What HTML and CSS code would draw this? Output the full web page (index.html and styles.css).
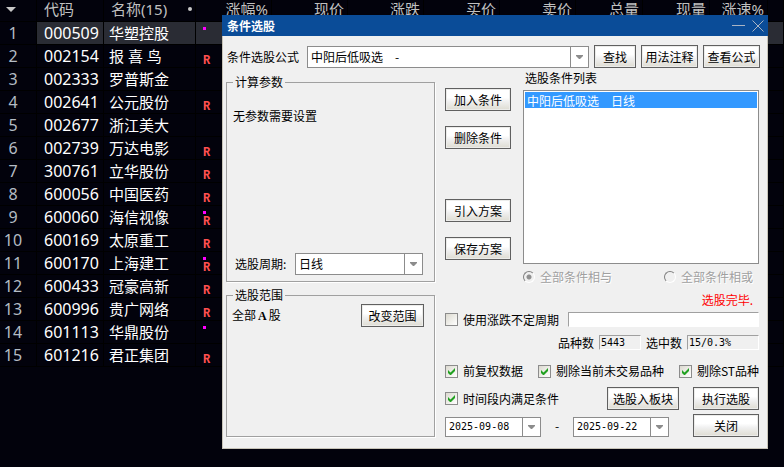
FILE: index.html
```html
<!DOCTYPE html>
<html lang="zh-CN">
<head>
  <meta charset="UTF-8">
  <meta name="viewport" content="width=device-width, initial-scale=1.0">
  <title>条件选股</title>
  <link rel="stylesheet" href="styles.css">
</head>
<body>

<table class="quotes">
  <colgroup>
    <col class="c-index"><col class="c-code"><col class="c-name">
    <col class="c-wide"><col class="c-wide"><col class="c-wide"><col class="c-wide"><col class="c-wide">
    <col class="c-mid"><col class="c-mid"><col class="c-small"><col>
  </colgroup>
  <thead>
    <tr>
      <th class="index"><svg class="sort" width="10" height="5" viewBox="0 0 10 5"><path d="M0 0h10L5 5z" fill="#c8c8c8"/></svg></th>
      <th class="code">代码</th>
      <th class="name"><div class="name-head"><span>名称(15)</span><i class="bullet"></i></div></th>
      <th>涨幅%</th><th>现价</th><th>涨跌</th><th>买价</th><th>卖价</th><th>总量</th><th>现量</th><th>涨速%</th><th></th>
    </tr>
  </thead>
  <tbody id="rows"></tbody>
</table>

<div class="dialog" role="dialog" aria-labelledby="dialogTitle">
  <div class="titlebar">
    <h1 id="dialogTitle">条件选股</h1>
    <button type="button" class="win-btn" aria-label="最小化"><svg width="13" height="13" viewBox="0 0 13 13"><path d="M0 6.500h13" stroke="#a9b4c4" fill="none"/></svg></button>
    <button type="button" class="win-btn" aria-label="关闭窗口"><svg width="12" height="12" viewBox="0 0 12 12"><path d="M.5.5l11 11M11.500.5l-11 11" stroke="#a9b4c4" fill="none"/></svg></button>
  </div>

  <form class="content">
    <div class="formula">
      <label for="formula">条件选股公式</label>
      <select id="formula" class="combo"><option>中阳后低吸选　-</option></select>
      <button type="button" class="btn find">查找</button>
      <button type="button" class="btn wide">用法注释</button>
      <button type="button" class="btn wide">查看公式</button>
    </div>

    <div class="main">
      <div class="left">
        <fieldset class="group params">
          <legend>计算参数</legend>
          <p class="hint">无参数需要设置</p>
          <div class="period">
            <label for="period">选股周期:</label>
            <select id="period" class="combo"><option>日线</option></select>
          </div>
        </fieldset>
        <fieldset class="group range">
          <legend>选股范围</legend>
          <div class="range-row">
            <span>全部<b>A</b>股</span>
            <button type="button" class="btn">改变范围</button>
          </div>
        </fieldset>
      </div>

      <div class="right">
        <div class="conditions">
          <div class="actions">
            <button type="button" class="btn">加入条件</button>
            <button type="button" class="btn">删除条件</button>
            <button type="button" class="btn load">引入方案</button>
            <button type="button" class="btn">保存方案</button>
          </div>
          <div class="list">
            <label for="list">选股条件列表</label>
            <select id="list" class="listbox" size="8"><option selected>中阳后低吸选　日线</option></select>
            <div class="radios">
              <label><input type="radio" name="mode" checked disabled> 全部条件相与</label>
              <label><input type="radio" name="mode" disabled> 全部条件相或</label>
            </div>
          </div>
        </div>

        <p class="status">选股完毕.</p>

        <div class="line unfixed">
          <label class="check"><input type="checkbox"> 使用涨跌不定周期</label>
          <input type="text" class="field empty" aria-label="不定周期">
        </div>

        <div class="line counts">
          <label for="total">品种数</label>
          <input id="total" type="text" class="field total" value="5443" readonly>
          <label for="hits">选中数</label>
          <input id="hits" type="text" class="field hits" value="15/0.3%" readonly>
        </div>

        <div class="line filters">
          <label class="check"><input type="checkbox" checked> 前复权数据</label>
          <label class="check"><input type="checkbox" checked> 剔除当前未交易品种</label>
          <label class="check"><input type="checkbox" checked> 剔除ST品种</label>
        </div>

        <div class="line run">
          <label class="check"><input type="checkbox" checked> 时间段内满足条件</label>
          <button type="button" class="btn block">选股入板块</button>
          <button type="button" class="btn">执行选股</button>
        </div>

        <div class="line dates">
          <select class="combo date" aria-label="开始日期"><option>2025-09-08</option></select>
          <span class="dash">-</span>
          <select class="combo date" aria-label="结束日期"><option>2025-09-22</option></select>
          <button type="button" class="btn">关闭</button>
        </div>
      </div>
    </div>
  </form>
</div>

<script>
  // 代码, 名称, 圆点标记, 融资标记
  const stocks = [
    ["000509", "华塑控股", 1, 0],
    ["002154", "报 喜 鸟", 0, 1],
    ["002333", "罗普斯金", 0, 0],
    ["002641", "公元股份", 0, 1],
    ["002677", "浙江美大", 0, 0],
    ["002739", "万达电影", 0, 1],
    ["300761", "立华股份", 0, 1],
    ["600056", "中国医药", 0, 1],
    ["600060", "海信视像", 1, 1],
    ["600169", "太原重工", 0, 1],
    ["600170", "上海建工", 1, 1],
    ["600433", "冠豪高新", 0, 1],
    ["600996", "贵广网络", 0, 1],
    ["601113", "华鼎股份", 1, 0],
    ["601216", "君正集团", 0, 1]
  ];

  document.getElementById("rows").innerHTML = stocks.map(([code, name, dot, tag], i) => `
    <tr class="${i === 0 ? "selected" : ""}">
      <td class="index">${i + 1}</td>
      <td class="code">${code}</td>
      <td class="name">${name}</td>
      <td class="mark-cell"><div class="marks">${dot ? '<i class="dot"></i>' : ""}${tag ? '<span class="tag">R</span>' : ""}</div></td>
      ${"<td></td>".repeat(8)}
    </tr>`).join("");
</script>

</body>
</html>
```

FILE: styles.css
```css
* {
  box-sizing: border-box;
}
body {
  margin: 0;
  min-height: 100vh;
  background: #02020c;
  color: #fff;
  font-family: "Noto Sans", "Noto Sans CJK SC", sans-serif;
  font-size: 15px;
  overflow: hidden;
}

/* quote table */
.quotes {
  width: 100%;
  table-layout: fixed;
  border-collapse: separate;
  border-spacing: 0;
}
.c-index { width: 37px; }
.c-code { width: 67px; }
.c-name { width: 92px; }
.c-wide { width: 76px; }
.c-mid { width: 67px; }
.c-small { width: 58px; }
.quotes th,
.quotes td {
  height: 23px;
  padding: 0;
  border-right: 1px solid #000;
  border-bottom: 1px solid #000;
  line-height: 20px;
  font-weight: normal;
  white-space: nowrap;
}
.quotes th {
  height: 22px;
  padding: 0 3px 3px 0;
  color: #c0c0c0;
  line-height: 18px;
  text-align: right;
}
.quotes .index {
  padding-right: 10px;
  color: #b4bcc4;
  font-size: 16px;
  text-align: center;
}
.quotes .code {
  padding-left: 7px;
  text-align: left;
}
td.code {
  font-size: 16px;
}
.quotes .name {
  padding-left: 5px;
  text-align: left;
}
.sort {
  display: block;
  margin-left: 6px;
}
.name-head {
  display: flex;
  align-items: center;
  justify-content: space-between;
  padding-left: 2px;
}
.bullet {
  width: 4px;
  height: 4px;
  border-radius: 2px;
  background: #c8c8c8;
}
.selected td {
  background: #2a2c34;
}
.selected .index {
  background: none;
}
.marks {
  display: flex;
  flex-direction: column;
  height: 22px;
  padding: 5px 0 1px 7px;
}
.dot {
  width: 3px;
  height: 3px;
  flex: none;
  background: #f0f;
}
.tag {
  margin-top: auto;
  color: #ff5050;
  font: bold 12px/10px "Liberation Mono", monospace;
}

/* dialog */
.dialog {
  position: absolute;
  top: 15px;
  left: 222px;
  right: 16px;
  border: 1px solid #c8c4b8;
  border-top: 0;
  background: #f0f0f0;
  color: #000;
  font-family: "Noto Sans CJK SC", sans-serif;
  font-size: 12px;
  line-height: 14px;
}
.titlebar {
  display: flex;
  align-items: center;
  gap: 7px;
  height: 21px;
  margin: 0 -1px;
  padding: 0 4px 0 5px;
  background: #0a4c98;
  color: #fff;
}
.titlebar h1 {
  flex: 1;
  margin: 0;
  font-size: 12px;
}
.win-btn {
  display: flex;
  padding: 0;
  border: 0;
  background: none;
}
.content {
  padding: 9px 8px 11px 3px;
}
.formula {
  display: flex;
  align-items: center;
  gap: 5px;
  margin-right: -1px;
  padding-left: 1px;
}
.formula .combo {
  flex: 1;
  margin-left: 3px;
}
.find {
  width: 42px;
}
.wide {
  width: 57px;
}

.btn {
  height: 23px;
  padding: 0;
  border: 1px solid #606060;
  background: linear-gradient(#fff 40%, #f0f0f0 60%, #dedcd2);
  box-shadow: inset 0 0 0 1px #ececea;
  color: #000;
  font: inherit;
  text-align: center;
  white-space: nowrap;
}
.combo {
  appearance: none;
  height: 22px;
  padding: 0 20px 0 3px;
  border: 1px solid #8c8c8c;
  border-radius: 0;
  background:
    url("data:image/svg+xml,%3Csvg xmlns='http://www.w3.org/2000/svg' width='18' height='40'%3E%3Cpath d='M0 0h1v40H0z' fill='%238c8c8c'/%3E%3Cpath d='M6 18h7v1l-3 3h-1l-3-3z' fill='%238c8c8c'/%3E%3C/svg%3E") right center no-repeat,
    #fff;
  color: #000;
  font: inherit;
}

.main {
  display: flex;
  gap: 10px;
  margin-top: 3px;
}
.left {
  display: flex;
  flex-direction: column;
  flex: 0 0 209px;
  gap: 6px;
  padding-top: 4px;
}
.group {
  min-width: 0;
  margin: 0;
  padding: 0 5px;
  border: 1px solid #a0a0a0;
  box-shadow: 1px 1px 0 #fff;
}
.group legend {
  margin-left: 1px;
  padding: 0 2px;
}
.hint {
  margin: 20px 0 0 1px;
}
.period {
  display: flex;
  align-items: center;
  justify-content: space-between;
  margin: 130px 6px 6px 3px;
}
.period .combo {
  width: 128px;
}
.range {
  flex: 1;
}
.range-row {
  display: flex;
  align-items: center;
  justify-content: space-between;
  margin-top: 2px;
  padding-right: 5px;
}
.range-row .btn {
  width: 63px;
}
.range-row b {
  font-family: "Liberation Serif", serif;
  padding: 0 2px;
}

.right {
  flex: 1;
  min-width: 0;
}
.conditions {
  display: flex;
  gap: 12px;
}
.actions {
  display: flex;
  flex-direction: column;
  flex: 0 0 66px;
  gap: 15px;
  padding-top: 17px;
}
.load {
  margin-top: 35px;
}
.list {
  display: flex;
  flex-direction: column;
  flex: 1;
}
.list > label {
  padding-left: 2px;
}
.listbox {
  height: 174px;
  margin: 5px 0;
  padding: 1px;
  border: 1px solid #8c8c8c;
  border-radius: 0;
  background: #fff;
  font: inherit;
  overflow: hidden;
}
.listbox option {
  height: 16px;
  min-height: 0;
  padding: 0 2px;
  line-height: 14px;
}
.listbox option:checked {
  background: linear-gradient(#39f, #39f);
  -webkit-text-fill-color: #fff;
}
.radios {
  display: flex;
  justify-content: space-between;
  padding: 1px 6px 0 0;
  color: #a0a0a0;
  text-shadow: 1px 1px 0 #fff;
}
.radios label {
  display: flex;
  align-items: center;
  gap: 5px;
}
.radios input {
  appearance: none;
  width: 12px;
  height: 12px;
  margin: 0;
  border: 1px solid;
  border-color: #808080 #fff #fff #808080;
  border-radius: 50%;
}
.radios input:checked {
  background: radial-gradient(circle, #909090 2px, transparent 3px);
}
.status {
  margin: 9px 6px 0 0;
  color: #f00;
  text-align: right;
}

.line {
  display: flex;
  align-items: center;
}
.check {
  display: flex;
  align-items: center;
  gap: 5px;
  white-space: nowrap;
}
.check input {
  appearance: none;
  width: 13px;
  height: 13px;
  margin: 0;
  border: 1px solid #8c8c8c;
  background: linear-gradient(135deg, #dcdad0, #fff);
}
.check input:checked {
  background:
    url("data:image/svg+xml,%3Csvg xmlns='http://www.w3.org/2000/svg' width='11' height='11'%3E%3Cpath d='M2 4v3l2 2h1l4-4V2L4.500 6.500z' fill='%2321a121'/%3E%3C/svg%3E"),
    linear-gradient(135deg, #dcdad0, #fff);
}
.field {
  min-width: 0;
  height: 15px;
  padding: 0 1px;
  border: 1px solid;
  border-color: #a0a0a0 #fff #fff #a0a0a0;
  background: none;
  color: #000;
  font: 10px/13px "DejaVu Sans Mono", monospace;
}
.unfixed {
  gap: 9px;
  margin-top: 5px;
}
.empty {
  flex: 1;
  background: #fff;
}
.counts {
  justify-content: flex-end;
  gap: 5px;
  margin-top: 8px;
}
.total {
  width: 42px;
}
.hits {
  width: 72px;
}
.filters {
  justify-content: space-between;
  margin-top: 14px;
}
.run {
  margin-top: 9px;
}
.run .block {
  width: 72px;
  margin: 0 14px 0 auto;
}
.run .btn:last-child,
.dates .btn {
  width: 66px;
}
.dates {
  align-items: flex-end;
  margin-top: 4px;
}
.date {
  width: 96px;
  height: 20px;
  font: 10px/14px "DejaVu Sans Mono", monospace;
}
.dash {
  align-self: center;
  width: 32px;
  text-align: center;
}
.dates .btn {
  margin-left: auto;
}
```
